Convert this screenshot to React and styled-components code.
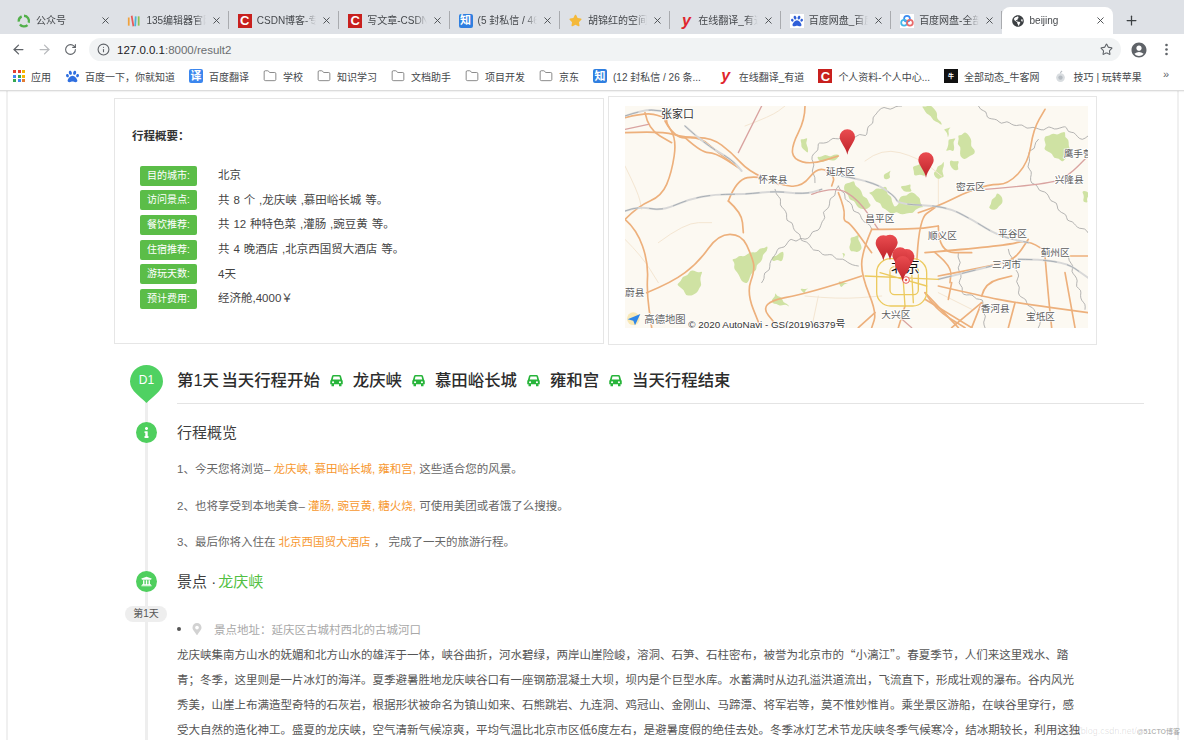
import React from 'react';
import styled, { createGlobalStyle } from 'styled-components';
import { ArrowLeft, ArrowRight, RotateCw, Info, Star, Plus, X, Folder } from 'lucide-react';
import { FaUniversity, FaInfo, FaMapMarkerAlt, FaGlobeAmericas, FaPaw, FaStar } from 'react-icons/fa';
import { MdAccountCircle } from 'react-icons/md';

const GlobalStyle = createGlobalStyle`
    html, body {
        margin: 0;
        padding: 0;
        background: #fff;
    }
    body {
        font-family: "Liberation Sans", "Noto Sans CJK SC", sans-serif;
        color: #333;
    }
`;

const Root = styled.div`
    position: relative;
    width: 1184px;
    height: 740px;
    overflow: hidden;
`;

/* browser chrome */
const TabBar = styled.div`
    height: 34px;
    box-sizing: border-box;
    padding: 7px 0 0 8px;
    background: #dee1e6;
    display: flex;
    align-items: center;
`;

const Tab = styled.div`
    width: ${p => p.$active ? '111px' : '110.4px'};
    height: 27px;
    box-sizing: border-box;
    padding: 0 7px 0 9px;
    display: flex;
    align-items: center;
    gap: 5px;
    position: relative;
    background: ${p => p.$active ? '#fff' : 'transparent'};
    border-radius: 8px 8px 0 0;

    &::after {
        content: '';
        display: ${p => p.$sep ? 'block' : 'none'};
        position: absolute;
        right: 0;
        top: 4px;
        width: 1px;
        height: 18px;
        background: #a9abaf;
    }
`;

const TabTitle = styled.span`
    flex: 1;
    min-width: 0;
    font-size: 10px;
    line-height: 14px;
    color: #45484c;
    white-space: nowrap;
    overflow: hidden;
    -webkit-mask-image: linear-gradient(to right, #000 80%, transparent 100%);
`;

const NewTab = styled.div`
    margin-left: 11px;
    display: flex;
    color: #3c4043;
`;

const Fav = styled.span`
    flex: none;
    width: 14px;
    height: 14px;
    display: inline-flex;
    align-items: center;
    justify-content: center;
    background: ${p => p.$bg || 'transparent'};
    color: ${p => p.$color || '#fff'};
    font-size: ${p => p.$font || 11}px;
    font-weight: 700;
    font-style: ${p => p.$italic ? 'italic' : 'normal'};
    line-height: 1;
    border-radius: ${p => p.$round ? '2px' : '0'};
`;

const Toolbar = styled.div`
    height: 31px;
    box-sizing: border-box;
    padding: 0 0 0 11px;
    background: #fff;
    display: flex;
    align-items: center;
    color: #5f6368;
`;

const NavBtn = styled.div`
    width: ${p => p.$w}px;
    display: flex;
    color: ${p => p.$off ? '#b8babd' : '#5f6368'};
`;

const AddressBar = styled.div`
    width: 1032px;
    height: 23px;
    margin: 0 9px 0 11px;
    padding: 0 8px;
    box-sizing: border-box;
    background: #f1f3f4;
    border-radius: 12px;
    display: flex;
    align-items: center;
    gap: 7px;
`;

const Url = styled.div`
    flex: 1;
    font-size: 11.5px;
    color: #6a6d70;
    b {
        font-weight: 400;
        color: #202124;
    }
`;

const Bookmarks = styled.div`
    height: 26px;
    box-sizing: border-box;
    padding: 0 0 3px 13px;
    display: flex;
    align-items: center;
    gap: 14px;
    background: #fff;
    border-bottom: 1px solid #dcdcdc;
    box-shadow: 0 1px 1px rgba(0, 0, 0, 0.05);
    position: relative;
`;

const Bookmark = styled.div`
    display: flex;
    align-items: center;
    gap: 6px;
    margin-right: ${p => p.$after || 0}px;
    font-size: 10px;
    color: #45484c;
    white-space: nowrap;
`;

const More = styled.span`
    position: absolute;
    right: 15px;
    top: 3px;
    font-size: 11px;
    color: #5f6368;
`;

const AppsGrid = styled.span`
    width: 12px;
    height: 12px;
    display: grid;
    grid-template-columns: repeat(3, 3px);
    grid-auto-rows: 3px;
    gap: 1.5px;
`;

const AppsDot = styled.i`
    background: ${p => p.$c};
`;

/* page body */
const Page = styled.main`
    margin: 0 5px 0 6px;
    height: 650px;
    border-left: 2px solid #f0f0f0;
    border-right: 2px solid #f0f0f0;
`;

const Cards = styled.section`
    display: flex;
    align-items: center;
    gap: 4px;
    padding: 5px 0 0 106px;
`;

const SummaryCard = styled.div`
    width: 490px;
    height: 246px;
    box-sizing: border-box;
    border: 1px solid #e6e6e6;
    padding: 30px 0 0 17px;
`;

const SummaryTitle = styled.div`
    font-size: 11.5px;
    line-height: 14px;
    font-weight: 700;
    color: #333;
    margin-bottom: 23px;
`;

const SummaryRows = styled.div`
    display: flex;
    flex-direction: column;
    gap: 4.7px;
    margin-left: 8px;
`;

const SummaryRow = styled.div`
    display: flex;
    align-items: center;
    gap: 21px;
`;

const Badge = styled.span`
    width: 57px;
    height: 20px;
    background: #5bbd48;
    border-radius: 2px;
    color: #fff;
    font-size: 10px;
    line-height: 19px;
    text-align: center;
`;

const SummaryValue = styled.span`
    font-size: 11.5px;
    line-height: 18px;
    margin-bottom: 1px;
    word-spacing: 0.7px;
    color: #444;
    white-space: pre;
`;

const MapCard = styled.div`
    width: 489px;
    height: 249px;
    box-sizing: border-box;
    border: 1px solid #e6e6e6;
    padding: 9px 8px 17px 16px;
`;

const MapSvg = styled.svg`
    display: block;
    width: 463px;
    height: 222px;
    font-family: "Liberation Sans", "Noto Sans CJK SC", sans-serif;
`;

const Timeline = styled.section`
    position: relative;
    margin: 20px 0 0 122px;
    width: 1014px;

    &::before {
        content: '';
        position: absolute;
        left: 15px;
        top: 10px;
        bottom: -200px;
        width: 3px;
        background: #eeeeee;
    }
`;

const Row = styled.div`
    position: relative;
    display: grid;
    grid-template-columns: 33px 1fr;
    column-gap: 14px;
    margin-top: ${p => p.$top || 0}px;
`;

const DayHeading = styled.h2`
    margin: 0;
    height: 38px;
    border-bottom: 1px solid #e4e4e4;
    display: flex;
    align-items: flex-start;
    gap: 8px;
    font-size: 16.4px;
    line-height: 30px;
    font-weight: 500;
    color: #2c2c2c;
`;

const DayLabel = styled.span`
    word-spacing: -2px;
`;

const CarSvg = styled.svg`
    flex: none;
    width: 15px;
    height: 15px;
    margin: 8px 1px 0 1px;
    fill: #27b43a;
`;

const Dot = styled.span`
    width: 21px;
    height: 21px;
    justify-self: center;
    border-radius: 50%;
    background: #4fcf5e;
    color: #fff;
    display: flex;
    align-items: center;
    justify-content: center;
    font-size: 11px;
`;

const SectionTitle = styled.h3`
    margin: 0;
    font-size: 15px;
    line-height: 21px;
    font-weight: 400;
    color: #3d3d3d;
`;

const SpotName = styled.span`
    margin-left: 2px;
    color: #52bf43;
`;

const Notes = styled.div`
    margin: 16px 0 0 47px;
    display: flex;
    flex-direction: column;
    gap: 16.5px;
`;

const Note = styled.p`
    margin: 0;
    font-size: 11.5px;
    line-height: 20px;
    color: #666;
    white-space: pre;
`;

const Hi = styled.span`
    color: #f7982f;
`;

const DayPill = styled.span`
    width: 42px;
    height: 16px;
    margin-left: -5px;
    background: #eeeeee;
    border-radius: 8px;
    font-size: 10px;
    line-height: 16px;
    text-align: center;
    color: #555;
`;

const Address = styled.div`
    margin-top: 13px;
    display: flex;
    align-items: center;
    height: 20px;
    font-size: 11.5px;
    color: #a8a8a8;
`;

const Bullet = styled.i`
    width: 4px;
    height: 4px;
    border-radius: 50%;
    background: #555;
    margin-right: 10px;
`;

const PinIcon = styled(FaMapMarkerAlt)`
    color: #d2d2d2;
    font-size: 12px;
    width: 12px;
    margin-right: 11px;
`;

const Para = styled.p`
    width: 906px;
    margin: 3px 0 0;
    font-family: "Noto Sans CJK SC", sans-serif;
    font-size: 11.5px;
    line-height: 25px;
    color: #555;
`;

const Watermark = styled.div`
    position: absolute;
    right: 4px;
    bottom: 2px;
    font-size: 9px;
    line-height: 12px;
    color: rgba(0, 0, 0, 0.13);
    b {
        font-size: 7px;
        color: rgba(0, 0, 0, 0.3);
    }
`;

const CsdnFav = () => (
    <Fav $bg="#c8201e" $font={13}>C</Fav>
);

const SpinFav = () => (
    <Fav>
        <svg width="14" height="14" viewBox="0 0 24 24" fill="none" stroke="#52b04a" strokeWidth="4">
            <path d="M12 3a9 9 0 0 1 8 12" />
            <path d="M18 19a9 9 0 0 1-13-1" />
            <path d="M3 13a9 9 0 0 1 5-9" />
        </svg>
    </Fav>
);

const EditorFav = () => (
    <Fav>
        <svg width="14" height="14" viewBox="0 0 24 24" fill="none" strokeWidth="3">
            <path d="M3 6v14" stroke="#f0a23c" />
            <path d="M8 3l3 18" stroke="#e65a5a" />
            <path d="M15 4l-1 17" stroke="#4bb4d8" />
            <path d="M20 4v16" stroke="#8cc152" />
        </svg>
    </Fav>
);

const CloudFav = () => (
    <Fav $bg="#fff">
        <svg width="14" height="14" viewBox="0 0 24 24" fill="none" strokeWidth="3">
            <circle cx="12" cy="8" r="5" stroke="#3d8df0" />
            <circle cx="7" cy="15" r="5" stroke="#45b6e8" />
            <circle cx="17" cy="15" r="5" stroke="#e86a6a" />
        </svg>
    </Fav>
);

const CarIcon = () => (
    <CarSvg viewBox="0 0 24 24">
        <path
            fillRule="evenodd"
            d="M7 3h10c1 0 1.800.6 2.200 1.600L21 11c.7.5 1 1.200 1 2v5h-2v3h-4v-3H8v3H4v-3H2v-5c0-.8.3-1.500 1-2l1.800-6.400C5.200 3.600 6 3 7 3zM7.200 5.500 6 10.500h12l-1.200-5zM6.500 13a1.700 1.700 0 1 0 0 3.400 1.700 1.700 0 0 0 0-3.400zM17.500 13a1.700 1.700 0 1 0 0 3.400 1.700 1.700 0 0 0 0-3.400z"
        />
    </CarSvg>
);

const tabs = [
    { icon: <SpinFav />, title: '公众号', sep: false },
    { icon: <EditorFav />, title: '135编辑器官网', sep: true },
    { icon: <CsdnFav />, title: 'CSDN博客-专业', sep: true },
    { icon: <CsdnFav />, title: '写文章-CSDN博客', sep: true },
    { icon: <Fav $bg="#2f7fe0" $round>知</Fav>, title: '(5 封私信 / 46 条', sep: true },
    { icon: <Fav $color="#f4b93a" $font={13}><FaStar /></Fav>, title: '胡锦红的空间', sep: true },
    { icon: <Fav $color="#e0252d" $font={16} $italic>y</Fav>, title: '在线翻译_有道', sep: true },
    { icon: <Fav $bg="#fff" $color="#2f5fd8" $font={12}><FaPaw /></Fav>, title: '百度网盘_百度', sep: true },
    { icon: <CloudFav />, title: '百度网盘-全部', sep: true },
];

const appColors = ['#e34133', '#e34133', '#f4b400', '#4285f4', '#34a853', '#f4b400', '#34a853', '#4285f4', '#e37c33'];

const FolderIcon = () => <Folder size={14} strokeWidth={1.3} color="#666" />;

const bookmarks = [
    { icon: <AppsGrid>{appColors.map((c, i) => <AppsDot key={i} $c={c} />)}</AppsGrid>, label: '应用' },
    { icon: <Fav $color="#2f6fe0" $font={13}><FaPaw /></Fav>, label: '百度一下，你就知道' },
    { icon: <Fav $bg="#3b86ee" $round>译</Fav>, label: '百度翻译' },
    { icon: <FolderIcon />, label: '学校' },
    { icon: <FolderIcon />, label: '知识学习' },
    { icon: <FolderIcon />, label: '文档助手' },
    { icon: <FolderIcon />, label: '项目开发' },
    { icon: <FolderIcon />, label: '京东' },
    { icon: <Fav $bg="#2f7fe0" $round>知</Fav>, label: '(12 封私信 / 26 条...', after: 4 },
    { icon: <Fav $color="#e0252d" $font={16} $italic>y</Fav>, label: '在线翻译_有道' },
    { icon: <CsdnFav />, label: '个人资料-个人中心...' },
    { icon: <Fav $bg="#111" $font={6}>牛</Fav>, label: '全部动态_牛客网' },
    {
        icon: (
            <Fav>
                <svg width="13" height="13" viewBox="0 0 24 24">
                    <circle cx="12" cy="14" r="8" fill="#d9dde0" />
                    <circle cx="12" cy="14" r="4" fill="#b6bcc2" />
                    <path d="M12 6c0-2 1-3 3-4" stroke="#b6bcc2" strokeWidth="2" fill="none" />
                </svg>
            </Fav>
        ),
        label: '技巧 | 玩转苹果',
    },
];

const summary = [
    ['目的城市:', '北京'],
    ['访问景点:', '共 8 个 ,龙庆峡 ,慕田峪长城 等。'],
    ['餐饮推荐:', '共 12 种特色菜 ,灌肠 ,豌豆黄 等。'],
    ['住宿推荐:', '共 4 晚酒店 ,北京西国贸大酒店 等。'],
    ['游玩天数:', '4天'],
    ['预计费用:', '经济舱,4000￥'],
];

/* map geometry, in a 3x coordinate space read off a crop of the reference */
const toPoints = d => {
    const n = d.match(/\d+/g).map(Number);
    const pts = [];
    for (let i = 0; i < n.length; i += 2) pts.push([n[i], n[i + 1]]);
    return pts;
};

// rounds the corners of a polyline
const smooth = (pts, closed) => {
    const mid = (a, b) => [(a[0] + b[0]) / 2, (a[1] + b[1]) / 2];
    const f = p => `${p[0].toFixed(1)} ${p[1].toFixed(1)}`;
    if (closed) {
        let d = `M${f(mid(pts[pts.length - 1], pts[0]))}`;
        pts.forEach((p, i) => {
            d += `Q${f(p)} ${f(mid(p, pts[(i + 1) % pts.length]))}`;
        });
        return d + 'Z';
    }
    let d = `M${f(pts[0])}`;
    for (let i = 1; i < pts.length - 1; i++) {
        d += `Q${f(pts[i])} ${f(mid(pts[i], pts[i + 1]))}`;
    }
    return d + `L${f(pts[pts.length - 1])}`;
};

// county borders and forest edges are never straight
const wiggle = (pts, step, amp, closed) => {
    const out = [];
    const count = closed ? pts.length : pts.length - 1;
    let k = 0;
    for (let i = 0; i < count; i++) {
        const a = pts[i];
        const b = pts[(i + 1) % pts.length];
        const len = Math.hypot(b[0] - a[0], b[1] - a[1]);
        const parts = Math.max(1, Math.round(len / step));
        for (let j = 0; j < parts; j++) {
            const t = j / parts;
            const off = amp * Math.sin(k * 2.4) * (k % 3 === 0 ? 1.4 : 1);
            out.push([
                a[0] + (b[0] - a[0]) * t - ((b[1] - a[1]) / len) * off,
                a[1] + (b[1] - a[1]) * t + ((b[0] - a[0]) / len) * off,
            ]);
            k++;
        }
    }
    if (!closed) out.push(pts[pts.length - 1]);
    return out;
};

const greens = [
    'M380 490L440 470L490 450L470 490L450 520L420 565L395 530Z',
    'M215 565L255 525L290 525L285 580L255 602Z',
    'M585 130L605 125L610 170L595 165Z',
    'M635 182L700 175L700 190L640 197Z',
    'M720 262L745 255L800 330L770 342L720 290Z',
    'M790 290L840 270L872 335L890 300L930 290L955 330L910 355L850 350Z',
    'M835 235L855 222L857 245L840 252Z',
    'M885 270L915 265L922 285L890 287Z',
    'M922 212L950 200L962 240L930 240Z',
    'M985 230L1015 195L1016 240L1000 252Z',
    'M1030 130L1050 125L1046 165L1025 167Z',
    'M1058 118L1090 110L1110 175L1070 190Z',
    'M1035 192L1060 195L1062 220L1040 222Z',
    'M950 30L985 30L1010 90L975 62Z',
    'M1320 120L1380 108L1400 170L1370 197L1320 160Z',
    'M1150 335L1175 290L1197 310L1175 342Z',
    'M1430 285L1449 285L1449 320L1435 317Z',
    'M735 425L760 415L770 465L735 467Z',
    'M500 482L540 468L530 496L505 496Z',
    'M585 578L610 575L600 592Z',
    'M510 590L555 632L500 622Z',
    'M710 470L725 475L715 490Z',
    'M1015 100L1035 92L1030 125Z',
    'M700 555L730 560L710 575Z',
];

const minorRoads = [
    'M60 210L100 290L110 340',
    'M420 90L500 60L540 30',
    'M780 195L830 155L940 185L1010 240',
    'M600 600L700 610L830 600',
    'M160 440L240 380L320 380',
    'M1000 250L1000 330',
    'M60 430L110 480L160 560',
    'M1000 590L1100 640',
    'M640 600L620 695',
];

const boundaries = [
    'M630 260L620 190L640 145L700 125L780 120L820 40L890 30',
    'M700 270L660 350L650 390L600 430L560 430L510 470L490 520L470 560',
    'M510 280L550 370L590 430L640 470L680 480L760 510',
    'M1120 30L1160 70L1250 90L1300 100L1380 95L1430 130L1449 120',
    'M1300 130L1270 180L1280 260L1330 300L1370 350L1400 380L1449 410',
    'M1060 470L1070 590L1130 610L1140 695',
    'M1210 460L1240 540L1240 590L1300 660L1300 695',
    'M1390 480L1420 570L1440 640',
    'M700 270L740 330L800 400',
];

const highways = [
    'M60 345L100 330L170 345L250 310L330 295L420 295L510 285L600 295L650 280',
    'M240 90L300 145L380 190L410 225',
    'M710 240L800 255L870 300L880 325L1020 330L1100 370L1180 420L1270 440',
    'M1000 550L1160 510',
    'M1240 490L1370 490L1449 545',
    'M60 60L120 40L170 45',
];

const pinkRoads = [
    'M60 100L130 85',
    'M400 170L470 30',
    'M1140 280L1330 265L1390 240L1449 180',
    'M620 295L690 270L760 310L820 400',
    'M880 660L920 695',
];

const roads = [
    'M60 110L170 105L240 125L320 125L380 170L430 225L520 265L590 275L640 210L690 240L680 270',
    'M60 370L100 330L170 300L200 230L215 130L180 75L190 55',
    'M60 370L95 400L130 500L125 590L140 695',
    'M125 590L200 560L280 500L340 415L410 415L440 480L450 520L425 590L465 690',
    'M370 315L410 350L415 410',
    'M370 315L395 250L460 240L520 265',
    'M600 30L600 70L560 150L565 190L620 205L700 180',
    'M240 125L290 170L330 170L400 215',
    'M180 75L210 130L280 120L340 170L400 215',
    'M120 50L130 100L200 140',
    'M700 290L720 340L715 375L735 380L800 470',
    'M940 350L1000 330L1070 295L1150 265L1210 265L1270 200L1285 100L1320 40',
    'M935 510L940 370L990 335',
    'M800 400L770 470L770 540L815 650L800 695',
    'M800 400L930 400L1000 390',
    'M960 470L1200 450L1270 430L1340 480L1449 480',
    'M1000 540L1160 510L1230 490L1270 430',
    'M960 590L1060 695',
    'M960 610L1100 695',
    'M1000 570L1130 600L1230 620L1449 650',
    'M1130 600L1140 560L1220 540',
    'M1130 620L1100 695',
    'M1230 620L1210 695',
    'M1320 480L1330 600L1340 695',
    'M1380 530L1410 695',
    'M770 540L620 590L460 620L520 695',
    'M900 630L880 695',
    'M810 650L760 695',
    'M1040 695L1130 620',
    'M960 590L990 640L1080 695',
    'M1040 560L1030 610',
    'M990 470L1040 510L1035 560',
    'M1000 390L1000 470L1100 470',
    'M60 65L120 50L170 60L185 75',
];

const curve = d => smooth(toPoints(d));

const mapLabels = [
    { x: 168, y: 66, t: '张家口', s: 33, c: '#333' },
    { x: 663, y: 237, t: '延庆区', s: 29 },
    { x: 460, y: 261, t: '怀来县', s: 29 },
    { x: 1053, y: 283, t: '密云区', s: 29 },
    { x: 1376, y: 184, t: '鹰手营', s: 29 },
    { x: 1349, y: 262, t: '兴隆县', s: 29 },
    { x: 781, y: 379, t: '昌平区', s: 29 },
    { x: 969, y: 430, t: '顺义区', s: 29 },
    { x: 1179, y: 424, t: '平谷区', s: 29 },
    { x: 1307, y: 479, t: '蓟州区', s: 29 },
    { x: 1161, y: 516, t: '三河市', s: 29 },
    { x: 1127, y: 647, t: '香河县', s: 29 },
    { x: 1263, y: 671, t: '宝坻区', s: 29 },
    { x: 829, y: 667, t: '大兴区', s: 29 },
    { x: 60, y: 601, t: '蔚县', s: 29 },
    { x: 858, y: 528, t: '北京', s: 43, c: '#111' },
];

const pinTips = [[727, 176], [963, 245], [855, 492], [835, 494], [905, 535], [885, 530], [893, 556]];

const pinPath = (x, y) =>
    `M${x} ${y}C${x - 4} ${y - 22} ${x - 23} ${y - 38} ${x - 23} ${y - 53}A23 23 0 0 1 ${x + 23} ${y - 53}C${x + 23} ${y - 38} ${x + 4} ${y - 22} ${x} ${y}Z`;

function RouteMap() {
    return (
        <MapSvg viewBox="60 30 1389 666">
            <defs>
                <linearGradient id="pinFill" x1="0" y1="0" x2="0" y2="1">
                    <stop offset="0" stopColor="#ea4c50" />
                    <stop offset="1" stopColor="#bd2229" />
                </linearGradient>
            </defs>
            <rect x="60" y="30" width="1389" height="666" fill="#fcf9f2" />
            {greens.map((d, i) => (
                <path key={i} d={smooth(wiggle(toPoints(d.replace('Z', '')), 13, 4, true), true)} fill="#cfe2a3" />
            ))}
            <g fill="none" strokeLinejoin="round" strokeLinecap="round">
                {minorRoads.map((d, i) => <path key={i} d={curve(d)} stroke="#f4e6d2" strokeWidth="3" />)}
                {boundaries.map((d, i) => <path key={i} d={smooth(wiggle(toPoints(d), 16, 6))} stroke="#a2a2a2" strokeWidth="2.4" />)}
                {roads.map((d, i) => <path key={i} d={curve(d)} stroke="#edb07c" strokeWidth="5" />)}
                {pinkRoads.map((d, i) => <path key={i} d={curve(d)} stroke="#d9a3a0" strokeWidth="4" />)}
                {highways.map((d, i) => <path key={i} d={curve(d)} stroke="#d8d8d8" strokeWidth="6" />)}
                {highways.map((d, i) => <path key={i} d={curve(d)} stroke="#8f9aa3" strokeWidth="2" strokeDasharray="40 34" />)}
                <rect x="815" y="488" width="150" height="142" rx="42" stroke="#ecca5f" strokeWidth="4" />
                <rect x="855" y="512" width="85" height="84" rx="14" stroke="#ecca5f" strokeWidth="4" />
                <path d="M780 540L1000 550M890 482L900 630M825 530L965 570M918 490L925 620" stroke="#ecca5f" strokeWidth="4" />
            </g>
            {mapLabels.map(l => (
                <text
                    key={l.t}
                    x={l.x}
                    y={l.y}
                    fontSize={l.s}
                    fill={l.c || '#5c5c5c'}
                    stroke="#fff"
                    strokeWidth="5"
                    paintOrder="stroke"
                >
                    {l.t}
                </text>
            ))}
            <circle cx="903" cy="552" r="10" fill="#fff" stroke="#ea5a5a" strokeWidth="3" />
            <circle cx="903" cy="552" r="4" fill="#ea5a5a" />
            {pinTips.map(([x, y], i) => <path key={i} d={pinPath(x, y)} fill="url(#pinFill)" />)}
            <circle cx="85" cy="668" r="19" fill="#f6dd8e" opacity="0.6" />
            <path d="M68 670L106 654L90 688L85 674Z" fill="#2e86e8" />
            <text x="118" y="680" fontSize="31" fill="#666" stroke="#fff" strokeWidth="4" paintOrder="stroke">高德地图</text>
            <text x="250" y="695" fontSize="29.500" fill="#333" stroke="#fff" strokeWidth="4" paintOrder="stroke">© 2020 AutoNavi - GS(2019)6379号</text>
        </MapSvg>
    );
}

const route = ['龙庆峡', '慕田峪长城', '雍和宫', '当天行程结束'];

export default function App() {
    return (
        <Root>
            <GlobalStyle />
            <TabBar>
                {tabs.map((tab, i) => (
                    <Tab key={i} $sep={tab.sep}>
                        {tab.icon}
                        <TabTitle>{tab.title}</TabTitle>
                        <X size={11} strokeWidth={2} color="#45484c" />
                    </Tab>
                ))}
                <Tab $active>
                    <Fav $color="#3c4043" $font={12}><FaGlobeAmericas /></Fav>
                    <TabTitle>beijing</TabTitle>
                    <X size={11} strokeWidth={2} color="#45484c" />
                </Tab>
                <NewTab><Plus size={15} strokeWidth={2} /></NewTab>
            </TabBar>

            <Toolbar>
                <NavBtn $w={26}><ArrowLeft size={15} /></NavBtn>
                <NavBtn $w={27} $off><ArrowRight size={15} /></NavBtn>
                <NavBtn $w={14}><RotateCw size={13} /></NavBtn>
                <AddressBar>
                    <Info size={13} color="#5f6368" />
                    <Url><b>127.0.0.1</b>:8000/result2</Url>
                    <Star size={13} color="#5f6368" />
                </AddressBar>
                <NavBtn $w={35}><MdAccountCircle size={18} /></NavBtn>
                <NavBtn $w={10}>
                    <svg width="3" height="13" viewBox="0 0 3 13" fill="#5f6368">
                        <circle cx="1.5" cy="2" r="1.3" />
                        <circle cx="1.5" cy="6.5" r="1.3" />
                        <circle cx="1.5" cy="11" r="1.3" />
                    </svg>
                </NavBtn>
            </Toolbar>

            <Bookmarks>
                {bookmarks.map((b, i) => (
                    <Bookmark key={i} $after={b.after}>
                        {b.icon}
                        {b.label}
                    </Bookmark>
                ))}
                <More>»</More>
            </Bookmarks>

            <Page>
                <Cards>
                    <SummaryCard>
                        <SummaryTitle>行程概要：</SummaryTitle>
                        <SummaryRows>
                            {summary.map(([label, value]) => (
                                <SummaryRow key={label}>
                                    <Badge>{label}</Badge>
                                    <SummaryValue>{value}</SummaryValue>
                                </SummaryRow>
                            ))}
                        </SummaryRows>
                    </SummaryCard>
                    <MapCard>
                        <RouteMap />
                    </MapCard>
                </Cards>

                <Timeline>
                    <Row>
                        <svg width="33" height="38" viewBox="0 0 33 38">
                            <path d="M16.5 38C11 32 0 26 0 16.5a16.5 16.5 0 0 1 33 0C33 26 22 32 16.5 38Z" fill="#4fd162" />
                            <text x="16.5" y="19" textAnchor="middle" fontSize="12" fill="#fff" fontFamily="Liberation Sans, sans-serif">D1</text>
                        </svg>
                        <DayHeading>
                            <DayLabel>第1天 当天行程开始</DayLabel>
                            {route.map(stop => (
                                <React.Fragment key={stop}>
                                    <CarIcon />
                                    <span>{stop}</span>
                                </React.Fragment>
                            ))}
                        </DayHeading>
                    </Row>

                    <Row $top={18}>
                        <Dot><FaInfo /></Dot>
                        <SectionTitle>行程概览</SectionTitle>
                    </Row>
                    <Notes>
                        <Note>1、今天您将浏览– <Hi>龙庆峡, 慕田峪长城, 雍和宫,</Hi> 这些适合您的风景。</Note>
                        <Note>2、也将享受到本地美食– <Hi>灌肠, 豌豆黄, 糖火烧,</Hi> 可使用美团或者饿了么搜搜。</Note>
                        <Note>3、最后你将入住在 <Hi>北京西国贸大酒店</Hi> ， 完成了一天的旅游行程。</Note>
                    </Notes>

                    <Row $top={19}>
                        <Dot><FaUniversity /></Dot>
                        <SectionTitle>景点 ·<SpotName>龙庆峡</SpotName></SectionTitle>
                    </Row>

                    <Row $top={14}>
                        <DayPill>第1天</DayPill>
                        <div>
                            <Address>
                                <Bullet />
                                <PinIcon />
                                景点地址：延庆区古城村西北的古城河口
                            </Address>
                            <Para>
                                龙庆峡集南方山水的妩媚和北方山水的雄浑于一体，峡谷曲折，河水碧绿，两岸山崖险峻，溶洞、石笋、石柱密布，被誉为北京市的“小漓江”。春夏季节，人们来这里戏水、踏青；冬季，这里则是一片冰灯的海洋。夏季避暑胜地龙庆峡谷口有一座钢筋混凝土大坝，坝内是个巨型水库。水蓄满时从边孔溢洪道流出，飞流直下，形成壮观的瀑布。谷内风光秀美，山崖上布满造型奇特的石灰岩，根据形状被命名为镇山如来、石熊跳岩、九连洞、鸡冠山、金刚山、马蹄潭、将军岩等，莫不惟妙惟肖。乘坐景区游船，在峡谷里穿行，感受大自然的造化神工。盛夏的龙庆峡，空气清新气候凉爽，平均气温比北京市区低6度左右，是避暑度假的绝佳去处。冬季冰灯艺术节龙庆峡冬季气候寒冷，结冰期较长，利用这独特的自然条件举办冰灯艺术节。
                            </Para>
                        </div>
                    </Row>
                </Timeline>
            </Page>

            <Watermark>https://blog.csdn.net/<b>@51CTO博客</b></Watermark>
        </Root>
    );
}
